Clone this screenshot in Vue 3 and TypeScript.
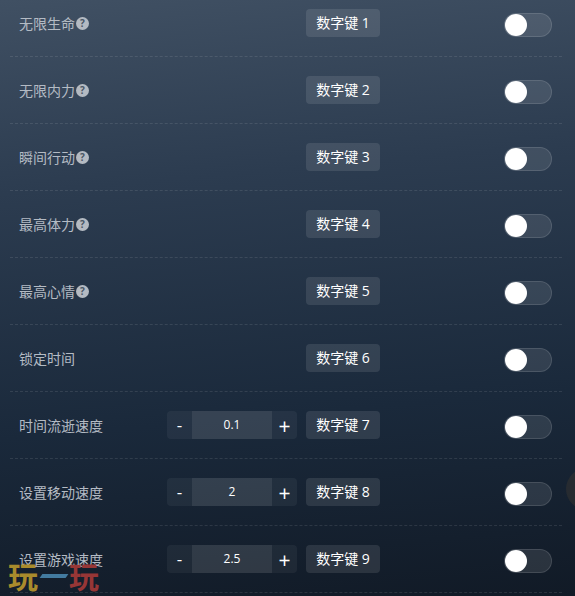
<template>
  <div class="page">
    <div class="list">
      <div v-for="row in rows" :key="row.key" class="row">
        <div class="label">
          <span>{{ row.label }}</span>
          <span v-if="row.tip" class="tip">?</span>
        </div>
        <div class="controls">
          <div v-if="row.value" class="stepper">
            <span class="step minus">-</span>
            <span class="value">{{ row.value }}</span>
            <span class="step plus">+</span>
          </div>
          <div class="hotkey">数字键 {{ row.key }}</div>
        </div>
        <div class="switch"><i class="knob"></i></div>
      </div>
    </div>
    <div class="side-dot"></div>
    <div class="watermark">
      <span class="wm-a">玩</span>
      <i class="wm-b"></i>
      <span class="wm-c">玩</span>
    </div>
  </div>
</template>

<script setup lang="ts">
interface Row {
  key: number;
  label: string;
  tip?: boolean;
  value?: string;
}

const rows: Row[] = [
  { key: 1, label: '无限生命', tip: true },
  { key: 2, label: '无限内力', tip: true },
  { key: 3, label: '瞬间行动', tip: true },
  { key: 4, label: '最高体力', tip: true },
  { key: 5, label: '最高心情', tip: true },
  { key: 6, label: '锁定时间' },
  { key: 7, label: '时间流逝速度', value: '0.1' },
  { key: 8, label: '设置移动速度', value: '2' },
  { key: 9, label: '设置游戏速度', value: '2.5' },
];
</script>

<style>
html,
body {
  margin: 0;
  background: #111b27;
}
</style>

<style scoped>
.page {
  position: relative;
  width: 575px;
  height: 596px;
  overflow: hidden;
  background: linear-gradient(175deg, #405063 0%, #2c3c50 30%, #1a293b 68%, #111a26 100%);
  font-family: "Open Sans", "Noto Sans CJK SC", sans-serif;
}

.list {
  margin: -10px 13px 0 10px;
}

.row {
  display: flex;
  align-items: center;
  height: 66px;
  padding: 0 10px 0 9px;
  border-bottom: 1px dashed rgba(255, 255, 255, 0.1);
}

.label {
  display: flex;
  align-items: center;
  width: 148px;
  font-size: 14px;
  color: #b4bbc4;
}

.tip {
  width: 13px;
  height: 13px;
  margin-left: 1px;
  border-radius: 50%;
  background: #b4bac2;
  color: #4a5665;
  font-size: 10px;
  font-weight: 700;
  line-height: 13px;
  text-align: center;
}

.controls {
  flex: 1;
  display: flex;
  align-items: center;
  justify-content: flex-end;
  gap: 9px;
  margin-right: 124px;
}

.stepper {
  display: flex;
  align-items: center;
  height: 28px;
  border-radius: 4px;
  overflow: hidden;
  background: rgba(255, 255, 255, 0.05);
  color: #fff;
}

.step {
  width: 25px;
  text-align: center;
  line-height: 28px;
}

.minus {
  font-size: 17px;
}

.plus {
  font-size: 21px;
  padding-top: 1px;
}

.value {
  width: 80px;
  line-height: 28px;
  text-align: center;
  font-size: 12px;
  background: rgba(255, 255, 255, 0.08);
}

.hotkey {
  width: 74px;
  height: 28px;
  line-height: 28px;
  text-align: center;
  font-size: 14px;
  color: #fff;
  border-radius: 4px;
  background: rgba(255, 255, 255, 0.1);
}

.switch {
  position: relative;
  box-sizing: border-box;
  width: 48px;
  height: 24px;
  margin-top: 4px;
  border-radius: 12px;
  border: 1px solid rgba(255, 255, 255, 0.12);
  background: rgba(255, 255, 255, 0.1);
}

.knob {
  position: absolute;
  left: 0;
  top: 0;
  width: 22px;
  height: 22px;
  border-radius: 50%;
  background: #fff;
}

.side-dot {
  position: absolute;
  left: 566px;
  top: 468px;
  width: 42px;
  height: 42px;
  border-radius: 50%;
  background: rgba(80, 65, 50, 0.3);
}

.watermark {
  position: absolute;
  left: 8px;
  top: 561px;
  display: flex;
  align-items: center;
  height: 32px;
  font-size: 30px;
  font-weight: 700;
  line-height: 32px;
}

.wm-a {
  color: #a98b2c;
}

.wm-b {
  width: 26px;
  height: 4px;
  margin: 0 2px 2px 3px;
  background: #437ba0;
  transform: skewX(-35deg);
}

.wm-c {
  color: #973636;
}
</style>
